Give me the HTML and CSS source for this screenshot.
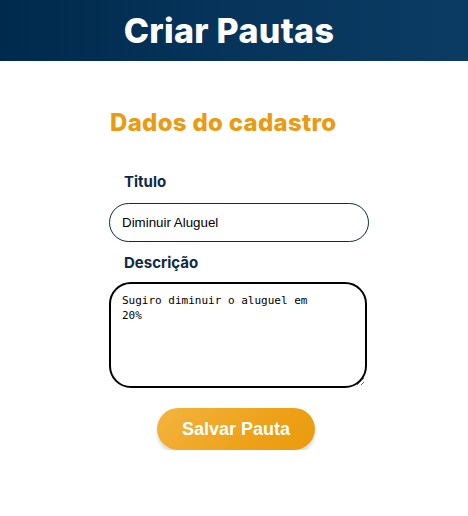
FILE: index.html
```html
<!DOCTYPE html>
<html lang="pt-BR">
<head>
<meta charset="utf-8">
<title>Criar Pautas</title>
<link rel="stylesheet" href="styles.css">
</head>
<body>
<header class="topbar">
  <h1 class="topbar-title">Criar Pautas</h1>
</header>
<main class="page">
  <form class="form">
    <h2 class="form-title">Dados do cadastro</h2>
    <label class="field-label" for="titulo">Titulo</label>
    <input class="text-input" id="titulo" type="text" value="Diminuir Aluguel">
    <label class="field-label field-label-tight" for="descricao">Descrição</label>
    <textarea class="text-area" id="descricao">Sugiro diminuir o aluguel em
20%</textarea>
    <div class="actions">
      <button class="btn-save" type="button">Salvar Pauta</button>
    </div>
  </form>
</main>
</body>
</html>
```

FILE: styles.css
```css
* { box-sizing: border-box; }
html, body { margin: 0; padding: 0; background: #ffffff; }
body { font-family: "Inter", "Liberation Sans", sans-serif; }

.topbar {
  height: 61px;
  background: linear-gradient(90deg, #002a4d 0%, #06345b 50%, #0b3b63 100%);
  display: flex;
  align-items: center;
  justify-content: center;
  padding-right: 10px;
}
.topbar-title {
  margin: 0;
  color: #ffffff;
  font-family: "Inter", sans-serif;
  font-weight: 800;
  font-size: 34px;
  letter-spacing: 0.3px;
  line-height: 1;
}

.page {
  display: flex;
  justify-content: center;
  padding-left: 10px;
}
.form {
  width: 260px;
  display: flex;
  flex-direction: column;
  padding-top: 48px;
}
.form-title {
  margin: 0 0 36px 1px;
  color: #eb9a12;
  font-family: "Inter", sans-serif;
  font-weight: 800;
  font-size: 24px;
  letter-spacing: 0.3px;
  line-height: 28px;
}
.field-label {
  margin: 0 0 12px 15px;
  color: #0d2b45;
  font-family: "Inter", sans-serif;
  font-weight: 700;
  font-size: 15px;
  line-height: 18px;
}
.field-label-tight { margin-bottom: 10px; }
.text-input {
  width: 260px;
  height: 39px;
  border: 1px solid #0d2b45;
  border-radius: 20px;
  padding: 0 12px;
  font-family: "Liberation Sans", Arial, sans-serif;
  font-size: 13.33px;
  color: #000000;
  margin-bottom: 12px;
  background: #ffffff;
}
.text-area {
  width: 258px;
  height: 106px;
  border: 2px solid #000000;
  border-radius: 22px;
  padding: 9px 11px;
  font-family: "DejaVu Sans Mono", monospace;
  font-size: 11px;
  line-height: 15px;
  color: #000000;
  resize: vertical;
  background: #ffffff;
}
.actions {
  display: flex;
  justify-content: center;
  padding-top: 20px;
  padding-right: 6px;
}
.btn-save {
  width: 158px;
  height: 42px;
  border: none;
  border-radius: 21px;
  background: linear-gradient(135deg, #f3b43f 0%, #eea21a 60%, #ea9a0c 100%);
  color: #ffffff;
  font-family: "Liberation Sans", Arial, sans-serif;
  font-weight: 700;
  font-size: 18px;
  box-shadow: 0 4px 3px rgba(120, 150, 160, 0.3);
  cursor: pointer;
}
```
